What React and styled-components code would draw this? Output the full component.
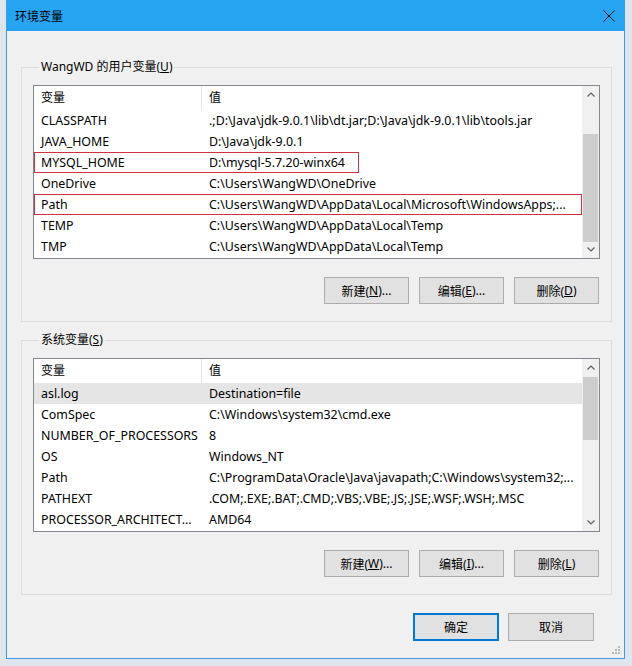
import React from 'react';
import styled, { createGlobalStyle } from 'styled-components';

const GlobalStyle = createGlobalStyle`
  body {
    margin: 0;
    background: #dfe5ec;
    font-family: "Noto Sans", "Noto Sans CJK SC", sans-serif;
    font-size: 12px;
    color: #000;
  }
`
const Page = styled.div`
  width: 632px;
  height: 666px;
  overflow: hidden;
`
const Window = styled.div`
  position: relative;
  margin-left: 6px;
  width: 619px;
  height: 659px;
  box-sizing: border-box;
  background: #f0f0f0;
  border: 1px solid #3d9be3;
  border-top: none;
  display: flex;
  flex-direction: column;
`
const TitleBar = styled.div`
  height: 31px;
  flex-shrink: 0;
  background: #26a3f1;
  display: flex;
  align-items: center;
  justify-content: space-between;
  padding: 0 9px 0 8px;
  font-family: "Noto Sans CJK SC", sans-serif;
  font-size: 12px;
`
const CloseIcon = styled.svg`
  width: 12px;
  height: 12px;
  display: block;
`
const Body = styled.div`
  padding: 28px 12px 0 14px;
  display: flex;
  flex-direction: column;
`
const Group = styled.fieldset`
  margin: 0 0 10px 0;
  padding: 10px 11px 17px 11px;
  border: 1px solid #dcdcdc;
  min-width: 0;
`
const Legend = styled.legend`
  margin-left: 6px;
  padding: 0 2px;
  line-height: 16px;
  font-size: 12px;
`
const List = styled.div`
  height: 174px;
  box-sizing: border-box;
  border: 1px solid #828790;
  background: #fff;
  display: flex;
`
const Table = styled.div`
  flex: 1;
  min-width: 0;
`
const HeaderRow = styled.div`
  display: grid;
  grid-template-columns: 168px 1fr;
  height: 24px;
  line-height: 24px;
`
const HeaderCell = styled.div`
  padding-left: 7px;
  border-right: ${p => (p.$sep ? '1px solid #e5e5e5' : 'none')};
`
const Row = styled.div`
  position: relative;
  display: grid;
  grid-template-columns: 168px 1fr;
  height: 21px;
  line-height: 21px;
  background: ${p => (p.$selected ? '#e5e5e5' : 'transparent')};
`
const Cell = styled.div`
  padding-left: 7px;
  font-size: 12.4px;
  white-space: nowrap;
  overflow: hidden;
`
const Mark = styled.span`
  position: absolute;
  z-index: 1;
  left: 0;
  top: 0;
  width: ${p => p.$w}px;
  height: 21px;
  box-sizing: border-box;
  border: 1px solid #cd3241;
  pointer-events: none;
`
const ScrollBar = styled.div`
  width: 17px;
  flex-shrink: 0;
  background: #f0f0f0;
  display: flex;
  flex-direction: column;
`
const Arrow = styled.div`
  height: 17px;
  display: flex;
  align-items: center;
  justify-content: center;
`
const Track = styled.div`
  flex: 1;
  padding: 0 1px;
`
const Thumb = styled.div`
  margin-top: ${p => p.$top}px;
  height: ${p => p.$h}px;
  background: #cdcdcd;
`
const ButtonRow = styled.div`
  margin-top: 18px;
  display: flex;
  justify-content: flex-end;
  gap: 10px;
  padding-right: 1px;
`
const Button = styled.div`
  width: ${p => (p.$wide ? 86 : 85)}px;
  height: ${p => (p.$wide ? 28 : 27)}px;
  box-sizing: border-box;
  background: #e1e1e1;
  border: ${p => (p.$primary ? '2px solid #0078d7' : '1px solid #adadad')};
  display: flex;
  align-items: center;
  justify-content: center;
  font-size: 12px;
`
const Footer = styled.div`
  margin-top: 8px;
  display: flex;
  justify-content: flex-end;
  gap: 9px;
  padding-right: 18px;
`
const Grip = styled.svg`
  position: absolute;
  right: 3px;
  bottom: 3px;
`

const Chevron = ({ down }) => (
  <svg width="8" height="5" viewBox="0 0 8 5">
    <polyline
      points={down ? '0.5,0.5 4,4 7.5,0.5' : '0.5,4.5 4,1 7.5,4.5'}
      fill="none"
      stroke="#606060"
      strokeWidth="1.2"
    />
  </svg>
)

const VarList = ({ rows, thumb }) => (
  <List>
    <Table>
      <HeaderRow>
        <HeaderCell $sep>变量</HeaderCell>
        <HeaderCell>值</HeaderCell>
      </HeaderRow>
      {rows.map((r) => (
        <Row key={r.name} $selected={r.selected}>
          <Cell>{r.name}</Cell>
          <Cell>{r.value}</Cell>
          {r.mark && <Mark $w={r.mark} />}
        </Row>
      ))}
    </Table>
    <ScrollBar>
      <Arrow><Chevron /></Arrow>
      <Track><Thumb $top={thumb.top} $h={thumb.h} /></Track>
      <Arrow><Chevron down /></Arrow>
    </ScrollBar>
  </List>
)

const userVars = [
  { name: 'CLASSPATH', value: '.;D:\\Java\\jdk-9.0.1\\lib\\dt.jar;D:\\Java\\jdk-9.0.1\\lib\\tools.jar' },
  { name: 'JAVA_HOME', value: 'D:\\Java\\jdk-9.0.1' },
  { name: 'MYSQL_HOME', value: 'D:\\mysql-5.7.20-winx64', mark: 325 },
  { name: 'OneDrive', value: 'C:\\Users\\WangWD\\OneDrive' },
  { name: 'Path', value: 'C:\\Users\\WangWD\\AppData\\Local\\Microsoft\\WindowsApps;...', mark: 548 },
  { name: 'TEMP', value: 'C:\\Users\\WangWD\\AppData\\Local\\Temp' },
  { name: 'TMP', value: 'C:\\Users\\WangWD\\AppData\\Local\\Temp' },
]

const systemVars = [
  { name: 'asl.log', value: 'Destination=file', selected: true },
  { name: 'ComSpec', value: 'C:\\Windows\\system32\\cmd.exe' },
  { name: 'NUMBER_OF_PROCESSORS', value: '8' },
  { name: 'OS', value: 'Windows_NT' },
  { name: 'Path', value: 'C:\\ProgramData\\Oracle\\Java\\javapath;C:\\Windows\\system32;...' },
  { name: 'PATHEXT', value: '.COM;.EXE;.BAT;.CMD;.VBS;.VBE;.JS;.JSE;.WSF;.WSH;.MSC' },
  { name: 'PROCESSOR_ARCHITECT...', value: 'AMD64' },
]

const App = () => (
  <Page>
    <GlobalStyle />
    <Window>
      <TitleBar>
        <span>环境变量</span>
        <CloseIcon viewBox="0 0 12 12">
          <path d="M0.5 0.5 L11.5 11.5 M11.5 0.5 L0.5 11.5" stroke="#111" strokeWidth="1" />
        </CloseIcon>
      </TitleBar>
      <Body>
        <Group>
          <Legend>WangWD 的用户变量(<u>U</u>)</Legend>
          <VarList rows={userVars} thumb={{ top: 31, h: 108 }} />
          <ButtonRow>
            <Button>新建(<u>N</u>)...</Button>
            <Button>编辑(<u>E</u>)...</Button>
            <Button>删除(<u>D</u>)</Button>
          </ButtonRow>
        </Group>
        <Group>
          <Legend>系统变量(<u>S</u>)</Legend>
          <VarList rows={systemVars} thumb={{ top: 1, h: 63 }} />
          <ButtonRow>
            <Button>新建(<u>W</u>)...</Button>
            <Button>编辑(<u>I</u>)...</Button>
            <Button>删除(<u>L</u>)</Button>
          </ButtonRow>
        </Group>
        <Footer>
          <Button $primary $wide>确定</Button>
          <Button $wide>取消</Button>
        </Footer>
      </Body>
      <Grip width="10" height="10" viewBox="0 0 10 10">
        <g fill="#b8b8b8">
          <rect x="7" y="1" width="2" height="2" />
          <rect x="4" y="4" width="2" height="2" />
          <rect x="7" y="4" width="2" height="2" />
          <rect x="1" y="7" width="2" height="2" />
          <rect x="4" y="7" width="2" height="2" />
          <rect x="7" y="7" width="2" height="2" />
        </g>
      </Grip>
    </Window>
  </Page>
)

export default App;
